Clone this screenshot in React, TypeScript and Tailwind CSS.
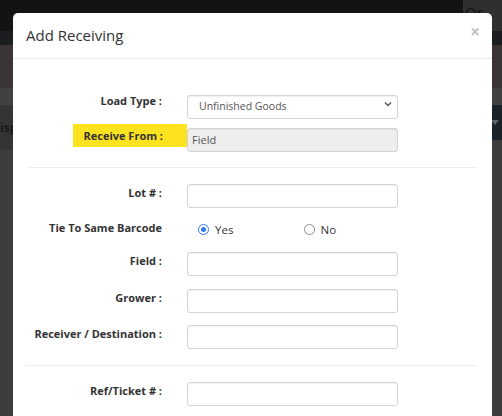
import React from "react";

const font = { fontFamily: '"Open Sans", "Liberation Sans", sans-serif' };

function Label({ children }: { children: React.ReactNode }) {
  return (
    <div className="w-[174px] shrink-0 pr-[25px] text-right text-[11px] font-bold leading-[18px] text-[#333]">
      {children}
    </div>
  );
}

function TextInput({ value = "", readOnly = false }: { value?: string; readOnly?: boolean }) {
  return (
    <div
      className={`flex h-[24px] w-[211px] items-center rounded-[3px] border border-[#d4d4d4] px-[4px] text-[11px] text-[#555] shadow-[inset_0_1px_1px_rgba(0,0,0,0.06)] ${
        readOnly ? "bg-[#eeeeee]" : "bg-white"
      }`}
    >
      {value}
    </div>
  );
}

function Radio({ checked, label }: { checked?: boolean; label: string }) {
  return (
    <div className="flex items-center gap-[6px] pl-[11px]">
      {checked ? (
        <span className="flex h-[11px] w-[11px] items-center justify-center rounded-full border-[1.5px] border-[#2f7bf5] bg-white">
          <span className="h-[5px] w-[5px] rounded-full bg-[#2f7bf5]" />
        </span>
      ) : (
        <span className="h-[11px] w-[11px] rounded-full border border-[#8c8c8c] bg-white" />
      )}
      <span className="text-[11.5px] text-[#333]">{label}</span>
    </div>
  );
}

export default function App() {
  return (
    <div className="relative h-[416px] w-[502px] overflow-hidden bg-[#3c3c3c]" style={font}>
      {/* dimmed page behind the modal */}
      <div className="flex h-[31px]">
        <div className="flex-1 bg-[#131313]" />
        <div className="w-[39px] bg-[#2f2f2f] pl-[2px] pt-[2px] text-[15px] leading-[20px] text-[#0d0d0d]">Or</div>
      </div>
      <div className="h-[14px] bg-[#1c1d20]" />
      <div className="h-[43px] bg-[#3a3434]" />
      <div className="h-[17px] bg-[#414141]" />
      <div className="flex h-[45px] items-start justify-between">
        <div className="flex h-[45px] w-[40px] items-center bg-[#343434]">
          <span className="text-[12px] font-bold text-[#1a1a1a]">isp</span>
        </div>
        <div className="flex h-[35px] w-[40px] items-center justify-end bg-[#1b222a] pr-[3px]">
          <svg width="8" height="5" viewBox="0 0 8 5">
            <path d="M0 0h8L4 5z" fill="#5a6470" />
          </svg>
        </div>
      </div>

      {/* modal */}
      <div className="absolute left-[13px] top-[13px] h-[420px] w-[479px] rounded-t-[5px] bg-white">
        <div className="relative flex h-[46px] items-center border-b border-[#ececec] px-[13px]">
          <span className="text-[15px] text-[#333]">Add Receiving</span>
          <span className="absolute right-[12px] top-[9px] text-[17px] font-bold leading-[20px] text-[#c2c2c2]">×</span>
        </div>

        <div className="pt-[33px]">
          <div className="flex">
            <Label>Load Type :</Label>
            <div className="relative h-[24px] w-[211px]">
              <select
                className="h-[24px] w-[211px] appearance-none rounded-[3px] border border-[#d4d4d4] bg-white pl-[11px] text-[10.5px] text-[#555] shadow-[inset_0_1px_1px_rgba(0,0,0,0.06)] outline-none"
                style={font}
                defaultValue="unfinished"
              >
                <option value="unfinished">Unfinished Goods</option>
              </select>
              <svg
                className="pointer-events-none absolute right-[6px] top-[9px]"
                width="8"
                height="6"
                viewBox="0 0 8 6"
              >
                <path d="M1 1.5l3 3 3-3" fill="none" stroke="#555" strokeWidth="1.4" />
              </svg>
            </div>
          </div>

          <div className="mt-[8px] flex items-start">
            <div className="flex w-[174px] shrink-0 justify-end">
              <div className="h-[23px] w-[114px] bg-[#fde21f] pr-[24px] text-right text-[11px] font-bold leading-[23px] text-[#333]">
                Receive From :
              </div>
            </div>
            <div className="mt-[4px]">
              <TextInput value="Field" readOnly />
            </div>
          </div>

          <div className="ml-[16px] mr-[15px] mt-[15px] h-px bg-[#eeeeee]" />

          <div className="mt-[16px] flex">
            <Label>Lot # :</Label>
            <TextInput />
          </div>

          <div className="mt-[12px] flex h-[17px] items-center">
            <div className="w-[174px] shrink-0 pr-[25px] text-right text-[11px] font-bold text-[#333]">
              Tie To Same Barcode
            </div>
            <div className="grid w-[211px] grid-cols-2 pt-[2px]">
              <Radio checked label="Yes" />
              <Radio label="No" />
            </div>
          </div>

          <div className="mt-[15px] flex">
            <Label>Field :</Label>
            <TextInput />
          </div>

          <div className="mt-[13px] flex">
            <Label>Grower :</Label>
            <TextInput />
          </div>

          <div className="mt-[12px] flex">
            <Label>Receiver / Destination :</Label>
            <TextInput />
          </div>

          <div className="ml-[12px] mr-[15px] mt-[16px] h-px bg-[#eeeeee]" />

          <div className="mt-[16px] flex">
            <Label>Ref/Ticket # :</Label>
            <TextInput />
          </div>
        </div>
      </div>
    </div>
  );
}
